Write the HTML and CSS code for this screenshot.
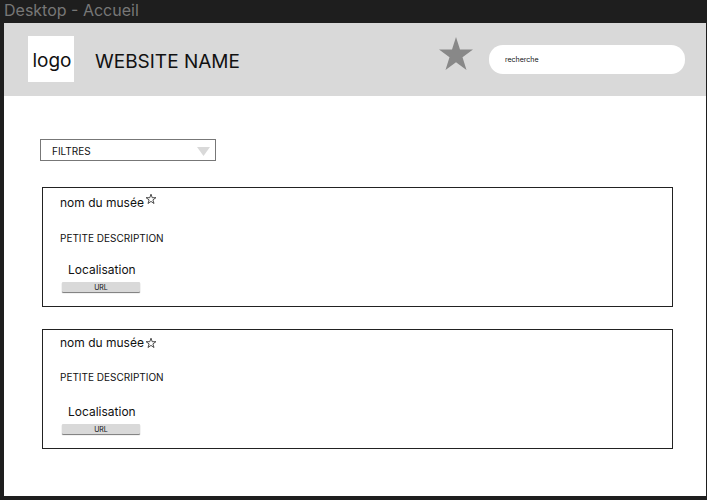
FILE: index.html
```html
<!DOCTYPE html>
<html lang="fr">
<head>
<meta charset="utf-8">
<title>Desktop - Accueil</title>
<link rel="stylesheet" href="styles.css">
</head>
<body>
<div class="frame-label">Desktop - Accueil</div>
<div class="frame">
  <header class="header">
    <div class="logo">logo</div>
    <h1 class="site-name">WEBSITE NAME</h1>
    <svg class="header-star" viewBox="0 0 34 33" aria-hidden="true"><path d="M17 0l4 12.400h13l-10.500 7.900 4 12.700L17 25.200 6.500 33l4-12.700L0 12.400h13z"/></svg>
    <input class="search" type="text" placeholder="recherche" aria-label="recherche">
  </header>
  <main class="content">
    <div class="filter">
      <select class="filter-select" aria-label="FILTRES"><option>FILTRES</option></select>
      <svg class="filter-arrow" viewBox="0 0 13 9" aria-hidden="true"><path d="M0 0h13L6.500 9z"/></svg>
    </div>
    <article class="card card-first">
      <div class="card-title">
        <h2 class="card-name">nom du musée</h2>
        <svg class="card-star" viewBox="0 0 12 12" aria-hidden="true"><path d="M6 1.200l1.200 3.500h3.700l-3 2.200 1.100 3.600L6 8.400l-3 2.100 1.100-3.600-3-2.200h3.700z"/></svg>
      </div>
      <p class="card-description">PETITE DESCRIPTION</p>
      <p class="card-place">Localisation</p>
      <button class="card-url" type="button">URL</button>
    </article>
    <article class="card">
      <div class="card-title">
        <h2 class="card-name">nom du musée</h2>
        <svg class="card-star" viewBox="0 0 12 12" aria-hidden="true"><path d="M6 1.200l1.200 3.500h3.700l-3 2.200 1.100 3.600L6 8.400l-3 2.100 1.100-3.600-3-2.200h3.700z"/></svg>
      </div>
      <p class="card-description">PETITE DESCRIPTION</p>
      <p class="card-place">Localisation</p>
      <button class="card-url" type="button">URL</button>
    </article>
  </main>
</div>
</body>
</html>
```
FILE: styles.css
```css
* {
  box-sizing: border-box;
}

body {
  margin: 0;
  min-height: 100vh;
  padding: 0 1px 4px 4px;
  display: flex;
  flex-direction: column;
  background: #1e1e1e;
  color: #111;
  font-family: Inter, "Liberation Sans", sans-serif;
}

h1, h2, p {
  margin: 0;
  font-weight: 400;
}

.frame-label {
  padding-bottom: 3px;
  font-size: 16px;
  line-height: 20px;
  color: #777;
}

.frame {
  flex: 1;
  background: #fff;
}

.header {
  display: flex;
  align-items: center;
  min-height: 73px;
  padding: 0 21px 0 24px;
  background: #d9d9d9;
}

.logo {
  width: 46px;
  height: 46px;
  margin-bottom: 2px;
  padding-left: 2px;
  font-size: 19px;
  line-height: 50px;
  text-align: center;
  background: #fff;
}

.site-name {
  margin: 4px auto 0 21px;
  font-size: 19px;
  line-height: 24px;
}

.header-star {
  width: 34px;
  height: 33px;
  margin: 0 16px 12px 0;
  fill: #888;
}

.search {
  width: 196px;
  height: 29px;
  padding: 0 16px;
  border: 0;
  border-radius: 14px;
  background: #fff;
  font: 7px Inter, "Liberation Sans", sans-serif;
}

.search::placeholder {
  color: #111;
}

.content {
  padding: 43px 33px 44px 38px;
}

.filter {
  position: relative;
  width: 176px;
  margin: 0 0 26px -2px;
}

.filter-select {
  display: block;
  width: 100%;
  height: 22px;
  padding: 2px 11px 0;
  border: 1px solid #777;
  border-radius: 0;
  appearance: none;
  background: #fff;
  color: #111;
  font: 10px Inter, "Liberation Sans", sans-serif;
}

.filter-arrow {
  position: absolute;
  top: 8px;
  right: 6px;
  width: 13px;
  height: 9px;
  fill: #d9d9d9;
  pointer-events: none;
}

.card {
  display: flex;
  flex-direction: column;
  align-items: flex-start;
  padding: 5px 17px 14px;
  border: 1px solid #222;
}

.card + .card {
  margin-top: 22px;
}

.card-title {
  display: flex;
  align-items: center;
  gap: 1px;
}

.card-name {
  font-size: 12px;
  line-height: 16px;
}

.card-star {
  width: 12px;
  height: 12px;
  fill: none;
  stroke: #222;
  stroke-width: 0.800;
}

.card-description {
  margin: 20px 0 21px;
  font-size: 10px;
  line-height: 12px;
}

.card-place {
  padding-left: 8px;
  font-size: 12px;
  line-height: 16px;
}

.card-url {
  width: 78px;
  height: 10px;
  margin: 4px 0 0 2px;
  padding: 0;
  border: 0;
  border-radius: 1px;
  background: #d9d9d9;
  box-shadow: 0 1px 1px #777;
  color: #111;
  font: 7px/9px Inter, "Liberation Sans", sans-serif;
}

.card-first {
  padding-top: 7px;
}

.card-first .card-title {
  align-items: flex-start;
}

.card-first .card-star {
  margin-top: -2px;
}

.card-first .card-description {
  margin: 21px 0 18px;
}
```
